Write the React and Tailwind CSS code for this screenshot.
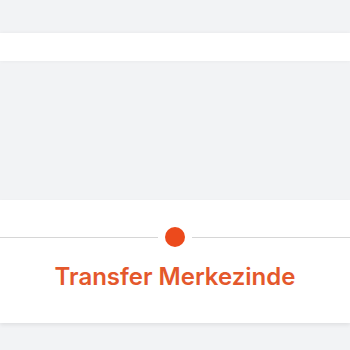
export default function App() {
  return (
    <div className="w-[350px] h-[350px] bg-[#f2f3f5] overflow-hidden flex flex-col" style={{ fontFamily: 'Inter, "Liberation Sans", sans-serif' }}>
      <div className="h-[33px]" />
      <div className="h-[28px] bg-white shadow-[0_0_4px_rgba(0,0,0,0.05)]" />
      <div className="h-[139px]" />
      <div className="h-[123px] bg-white shadow-[0_2px_4px_rgba(0,0,0,0.08)] flex flex-col items-center">
        <div className="w-full flex items-center mt-[27px]">
          <div className="flex-1 h-px bg-[#d6d6d6]" />
          <div className="w-[20px] h-[20px] rounded-full bg-[#ec4a1c] mx-[7px]" />
          <div className="flex-1 h-px bg-[#d6d6d6]" />
        </div>
        <div className="mt-[15px] text-[24px] font-semibold leading-[30px] text-[#e4582c]">
          Transfer Merkezinde
        </div>
      </div>
    </div>
  );
}
